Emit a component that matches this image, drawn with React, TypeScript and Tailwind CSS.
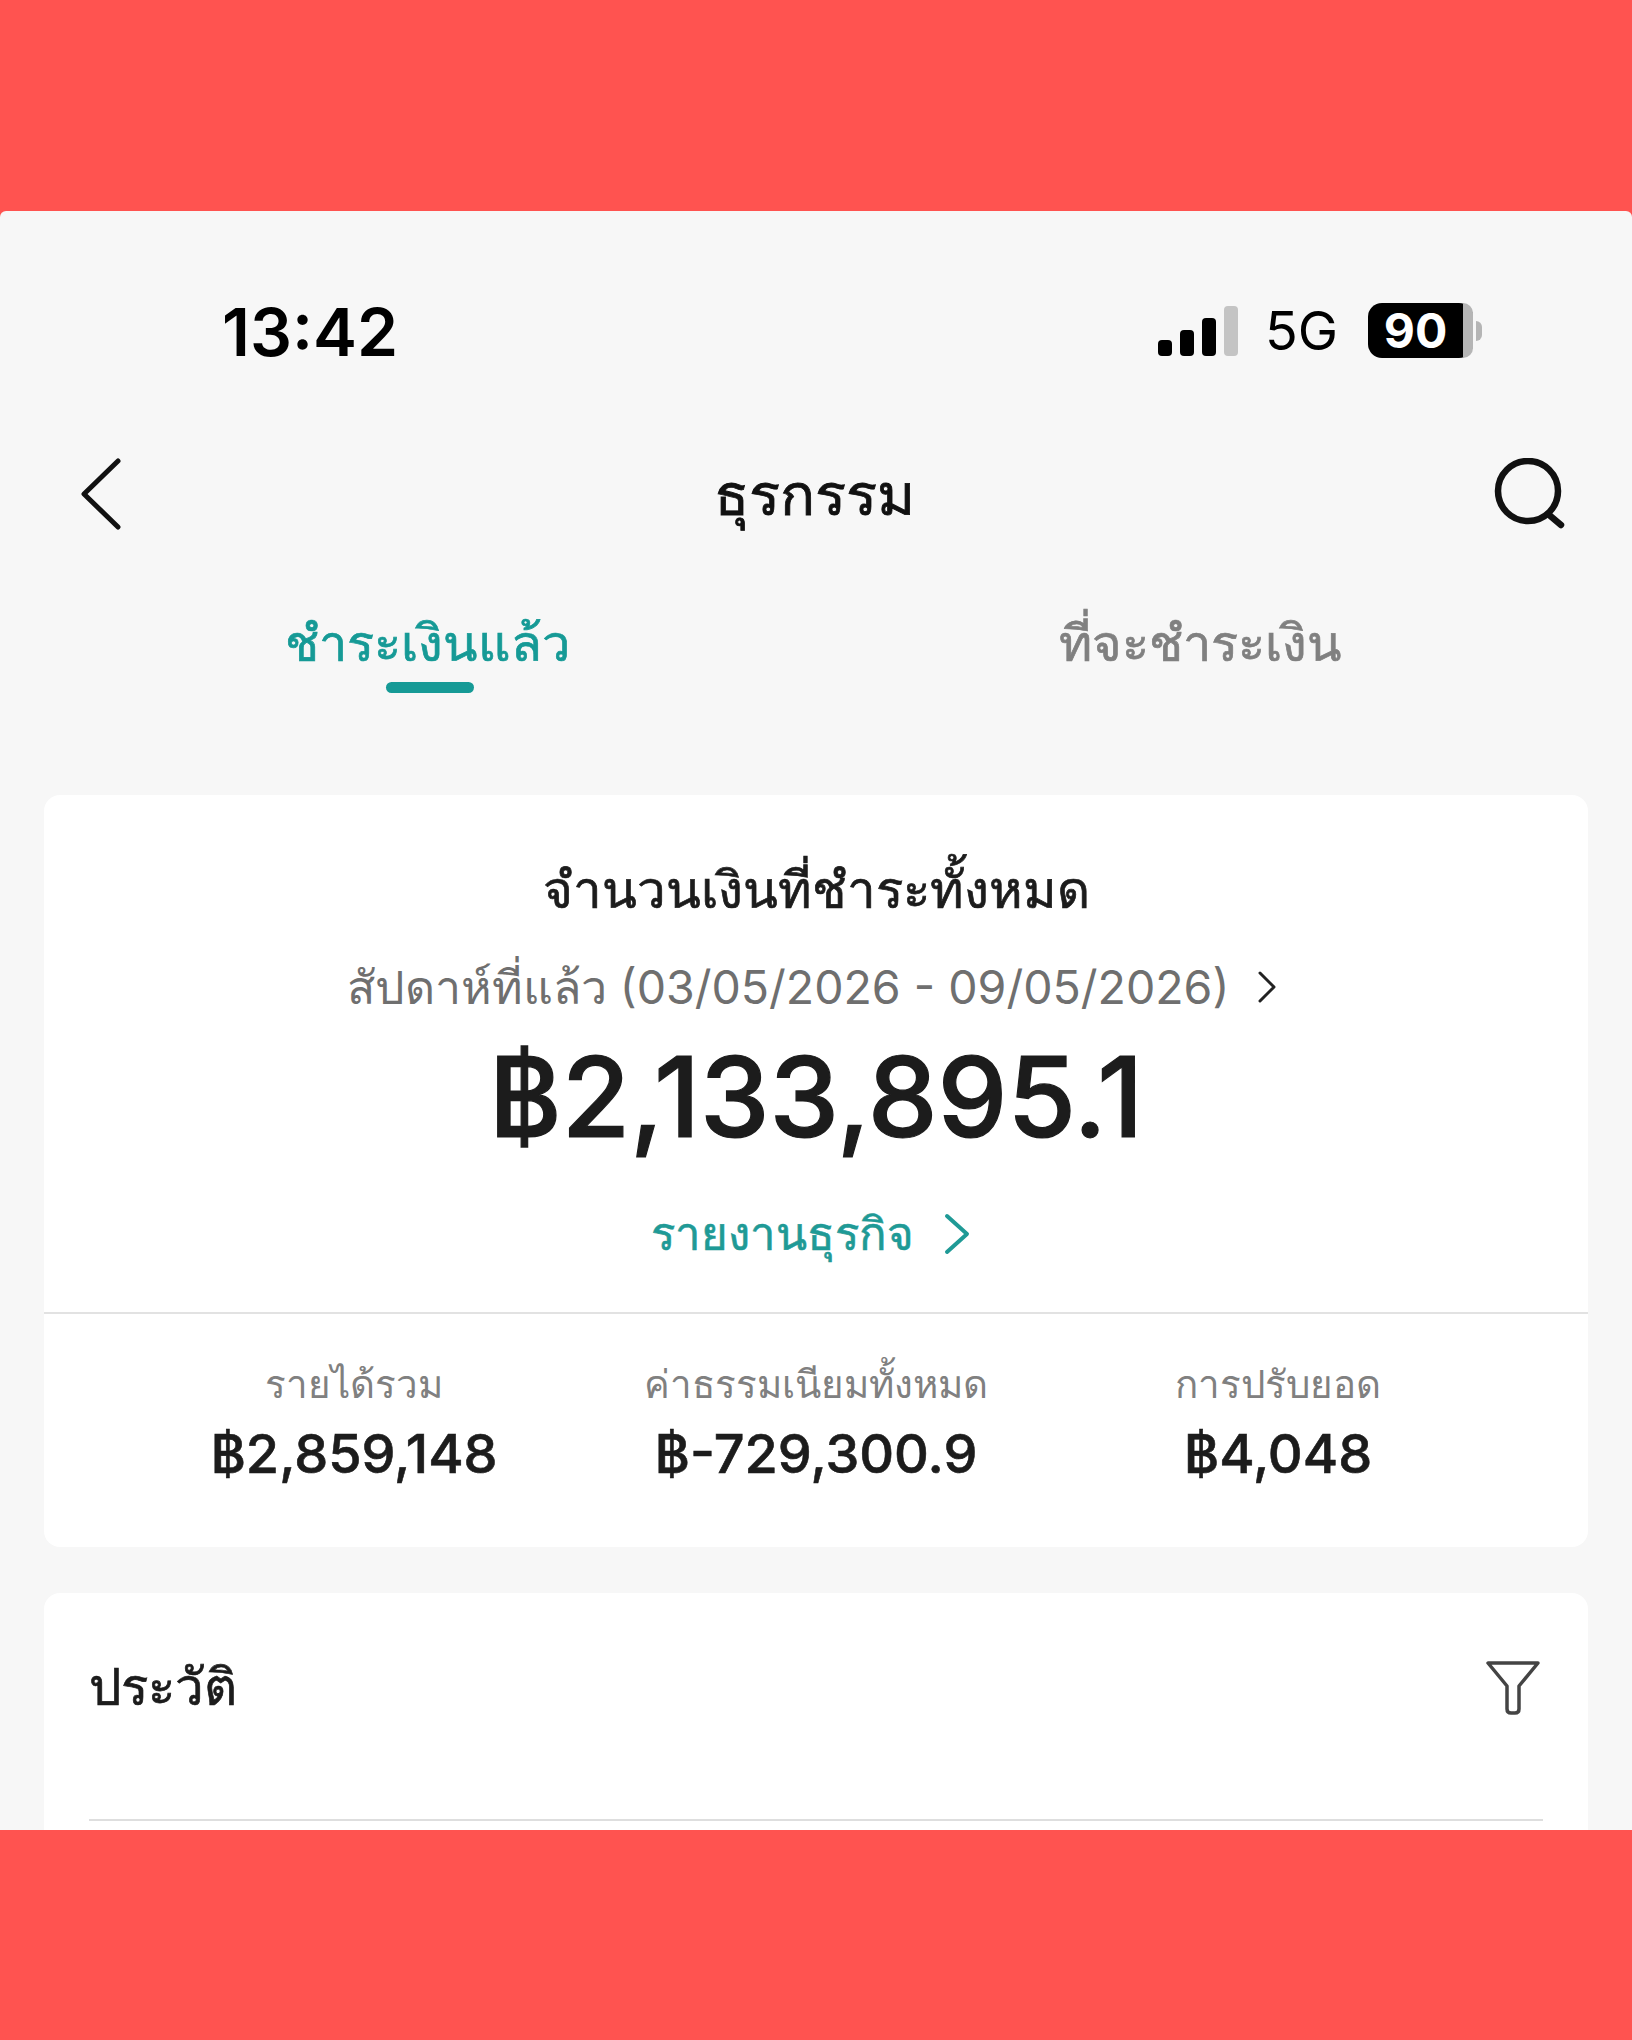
const stack = "font-['Inter','Noto_Sans','Liberation_Sans',sans-serif]";

function Stat({ label, value }: { label: string; value: string }) {
  return (
    <div className="flex flex-col items-center">
      <div className="h-[52px] text-[38.5px] leading-[52px] text-[#808080] whitespace-nowrap">{label}</div>
      <div className="mt-[14px] h-[60px] text-[54px] leading-[60px] font-medium [-webkit-text-stroke:0.6px] text-[#1c1c1c] whitespace-nowrap">{value}</div>
    </div>
  );
}

export default function App() {
  return (
    <div className={`flex h-[2040px] w-[1632px] flex-col bg-[#ff5350] ${stack}`}>
      <div className="h-[211px] shrink-0" />
      <div className="flex h-[1619px] shrink-0 flex-col overflow-hidden rounded-t-[6px] bg-[#f7f7f7]">
        {/* status bar */}
        <div className="flex h-[154px] shrink-0 items-end justify-between pl-[222px] pr-[159px]">
          <div className="text-[66px] leading-[66px] font-semibold text-black">13:42</div>
          <div className="mb-[7px] flex items-center">
            <svg width="82" height="50" viewBox="0 0 82 50" className="mr-[26px]">
              <rect x="1" y="34" width="14" height="16" rx="4" fill="#000" />
              <rect x="23" y="24" width="14" height="26" rx="4" fill="#000" />
              <rect x="45" y="12" width="14" height="38" rx="4" fill="#000" />
              <rect x="67" y="0" width="14" height="50" rx="4" fill="#c4c4c4" />
            </svg>
            <div className="mr-[30px] text-[54px] leading-[52px] text-black">5G</div>
            <div className="relative flex h-[55px] w-[105px] items-center justify-center rounded-[14px] bg-black text-[48px] leading-[55px] font-bold text-white">
              <span className="mr-[10px]">90</span>
              <span className="absolute right-0 top-0 h-[55px] w-[10px] rounded-r-[14px] bg-[#b5b5b5]" />
              <span className="absolute right-[-9px] top-[18px] h-[20px] w-[6px] rounded-r-[6px] bg-[#b5b5b5]" />
            </div>
          </div>
        </div>
        {/* nav */}
        <div className="mt-[89px] flex h-[80px] shrink-0 items-center justify-between pl-[80px] pr-[66px]">
          <div className="w-[54px]">
            <svg width="42" height="72" viewBox="0 0 42 72" fill="none" stroke="#111" strokeWidth="5" strokeLinecap="round" strokeLinejoin="round">
              <path d="M38 3 L4 36 L38 69" />
            </svg>
          </div>
          <div className="text-[58px] leading-[80px] font-medium [-webkit-text-stroke:0.8px] text-[#111]">ธุรกรรม</div>
          <svg width="72" height="72" viewBox="0 0 72 72" fill="none" stroke="#111" strokeWidth="6.5" strokeLinecap="round">
            <circle cx="34" cy="33" r="30" />
            <path d="M54 56 L67 67" />
          </svg>
        </div>
        {/* tabs */}
        <div className="mt-[69px] flex shrink-0">
          <div className="flex w-[860px] flex-col items-center">
            <div className="mr-[5px] text-[50.5px] leading-[80px] font-medium [-webkit-text-stroke:0.7px] text-[#169a96]">ชำระเงินแล้ว</div>
            <div className="mt-[-1px] h-[11px] w-[88px] rounded-full bg-[#169a96]" />
          </div>
          <div className="w-[680px] text-center text-[50.5px] leading-[80px] font-medium [-webkit-text-stroke:0.7px] text-[#808080]">ที่จะชำระเงิน</div>
        </div>
        {/* summary */}
        <div className="mx-[44px] mt-[102px] flex h-[752px] shrink-0 flex-col rounded-[16px] bg-white">
          <div className="mt-[60px] text-center text-[51px] leading-[70px] font-medium [-webkit-text-stroke:0.7px] text-[#1c1c1c]">จำนวนเงินที่ชำระทั้งหมด</div>
          <div className="mt-[32px] mr-[8px] flex items-center justify-center text-[46.5px] leading-[60px] text-[#6f6f6f]">
            <span>สัปดาห์ที่แล้ว (03/05/2026 - 09/05/2026)</span>
            <svg width="20" height="34" viewBox="0 0 20 34" fill="none" stroke="#222" strokeWidth="3" strokeLinecap="round" strokeLinejoin="round" className="ml-[28px]">
              <path d="M3 3 L17 17 L3 31" />
            </svg>
          </div>
          <div className="mt-[15px] text-center text-[111px] leading-[130px] font-medium [-webkit-text-stroke:1.2px] text-[#1c1c1c]">฿2,133,895.1</div>
          <div className="mt-[37px] mr-[12px] flex items-center justify-center text-[45.5px] leading-[70px] font-medium [-webkit-text-stroke:0.6px] text-[#1f9a96]">
            <span>รายงานธุรกิจ</span>
            <svg width="26" height="42" viewBox="0 0 26 42" fill="none" stroke="#1f9a96" strokeWidth="4" strokeLinecap="round" strokeLinejoin="round" className="ml-[30px]">
              <path d="M3 3 L23 21 L3 39" />
            </svg>
          </div>
          <div className="mt-[43px] h-[2px] bg-[#e2e2e2]" />
          <div className="mt-[44px] grid grid-cols-3 px-[79px]">
            <Stat label="รายได้รวม" value="฿2,859,148" />
            <Stat label="ค่าธรรมเนียมทั้งหมด" value="฿-729,300.9" />
            <Stat label="การปรับยอด" value="฿4,048" />
          </div>
        </div>
        {/* history */}
        <div className="mx-[44px] mt-[46px] flex flex-1 flex-col rounded-t-[16px] bg-white px-[45px]">
          <div className="flex h-[228px] shrink-0 items-start justify-between border-b-2 border-[#dedede] pt-[54px]">
            <div className="text-[51px] leading-[80px] font-medium [-webkit-text-stroke:0.7px] text-[#1c1c1c]">ประวัติ</div>
            <svg width="56" height="56" viewBox="0 0 56 56" fill="none" stroke="#444" strokeWidth="3.5" strokeLinejoin="round" strokeLinecap="round" className="mt-[12px] mr-[2px]">
              <path d="M3 4 H53 L34 27 V50 Q34 54 30 54 H26 Q22 54 22 50 V27 Z" />
            </svg>
          </div>
        </div>
      </div>
      <div className="flex-1" />
    </div>
  );
}
